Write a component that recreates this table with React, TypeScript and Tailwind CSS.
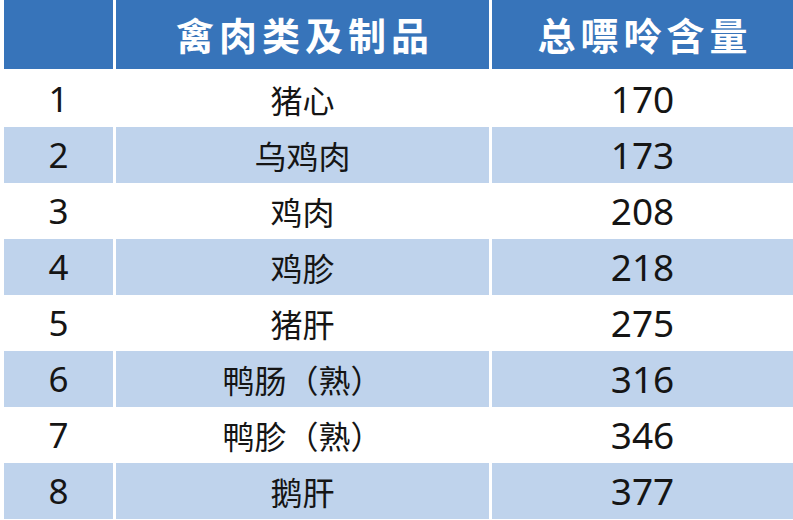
const rows = [
  { n: 1, name: "猪心", v: 170 },
  { n: 2, name: "乌鸡肉", v: 173 },
  { n: 3, name: "鸡肉", v: 208 },
  { n: 4, name: "鸡胗", v: 218 },
  { n: 5, name: "猪肝", v: 275 },
  { n: 6, name: "鸭肠（熟）", v: 316 },
  { n: 7, name: "鸭胗（熟）", v: 346 },
  { n: 8, name: "鹅肝", v: 377 },
];

const cjk = { fontFamily: '"Noto Sans CJK SC", "Noto Sans", sans-serif' };
const num = { fontFamily: '"Noto Sans", "Open Sans", sans-serif' };

export default function App() {
  return (
    <div className="h-[520px] w-[793px] overflow-hidden bg-white pl-[4px]">
      <div className="flex flex-col gap-[2px]">
        <div className="grid h-[69px] grid-cols-[109px_373px_1fr] gap-x-[3px]">
          <div className="bg-[#3774ba]" />
          <div className="flex items-center justify-center bg-[#3774ba] pb-[3px] pl-[5px] text-[38px] font-bold tracking-[5px] text-white" style={cjk}>
            禽肉类及制品
          </div>
          <div className="flex items-center justify-center bg-[#3774ba] pb-[3px] pl-[5px] text-[38px] font-bold tracking-[5px] text-white" style={cjk}>
            总嘌呤含量
          </div>
        </div>
        {rows.map((r, i) => {
          const bg = i % 2 === 1 ? "bg-[#bfd3ec]" : "bg-white";
          return (
            <div key={r.n} className="grid h-[54px] grid-cols-[109px_373px_1fr] gap-x-[3px] text-[#151515]">
              <div className={`flex items-center justify-center text-[35px] ${bg}`} style={num}>
                {r.n}
              </div>
              <div className={`flex items-center justify-center text-[32px] ${bg}`} style={cjk}>
                {r.name}
              </div>
              <div className={`flex items-center justify-center text-[37px] ${bg}`} style={num}>
                {r.v}
              </div>
            </div>
          );
        })}
      </div>
    </div>
  );
}
